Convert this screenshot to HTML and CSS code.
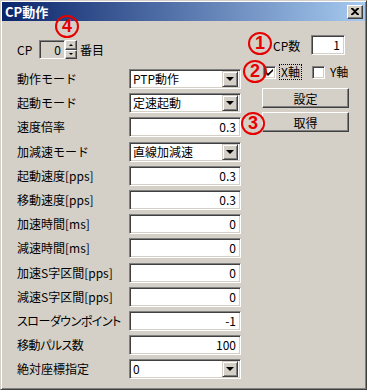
FILE: index.html
```html
<!DOCTYPE html>
<html lang="ja">
<head>
    <meta charset="UTF-8">
    <title>CP動作</title>
    <link rel="stylesheet" href="styles.css">
</head>
<body>

    <div class="window">
        <div class="titlebar">
            <span class="title">CP動作</span>
            <span class="close-btn">
                <svg width="8" height="7" viewBox="0 0 8 7"><path d="M0 0h2l2 2 2-2h2v1L5 3.5 8 6v1H6L4 5 2 7H0V6l3-2.5L0 1z" fill="#000"/></svg>
            </span>
        </div>

        <div class="client">
            <div class="left-col">
                <div class="cp-row">
                    <span class="cp-label">CP</span>
                    <span class="spin-box">0</span>
                    <span class="spin-btns">
                        <span class="spin-btn"><i class="tri-up"></i></span>
                        <span class="spin-btn"><i class="tri-down"></i></span>
                    </span>
                    <span class="cp-unit">番目</span>
                </div>

                <div class="form-grid">
                    <label>動作モード</label>
                    <div class="combo"><span class="combo-val">PTP動作</span><span class="combo-btn"><i class="tri-down big"></i></span></div>

                    <label>起動モード</label>
                    <div class="combo"><span class="combo-val">定速起動</span><span class="combo-btn"><i class="tri-down big"></i></span></div>

                    <label>速度倍率</label>
                    <div class="edit">0.3</div>

                    <label>加減速モード</label>
                    <div class="combo"><span class="combo-val">直線加減速</span><span class="combo-btn"><i class="tri-down big"></i></span></div>

                    <label>起動速度[pps]</label>
                    <div class="edit">0.3</div>

                    <label>移動速度[pps]</label>
                    <div class="edit">0.3</div>

                    <label>加速時間[ms]</label>
                    <div class="edit">0</div>

                    <label>減速時間[ms]</label>
                    <div class="edit">0</div>

                    <label>加速S字区間[pps]</label>
                    <div class="edit">0</div>

                    <label>減速S字区間[pps]</label>
                    <div class="edit">0</div>

                    <label class="narrow">スローダウンポイント</label>
                    <div class="edit">-1</div>

                    <label class="narrow">移動パルス数</label>
                    <div class="edit">100</div>

                    <label>絶対座標指定</label>
                    <div class="combo"><span class="combo-val">0</span><span class="combo-btn"><i class="tri-down big"></i></span></div>
                </div>
            </div>

            <div class="right-col">
                <div class="count-row">
                    <span>CP数</span>
                    <div class="edit count">1</div>
                </div>

                <div class="check-row">
                    <span class="checkbox">
                        <svg width="7" height="7" viewBox="0 0 7 7"><path d="M0 2v3l2 2 5-5V0L2 4.5z" fill="#000"/></svg>
                    </span>
                    <span class="check-label focused">X軸</span>
                    <span class="checkbox second"></span>
                    <span class="check-label">Y軸</span>
                </div>

                <button class="btn first">設定</button>
                <button class="btn">取得</button>
            </div>
        </div>

        <span class="mark mark-1">1</span>
        <span class="mark mark-2">2</span>
        <span class="mark mark-3">3</span>
        <span class="mark mark-4">4</span>
    </div>

</body>
</html>
```

FILE: styles.css
```css
* {
    margin: 0;
    padding: 0;
    box-sizing: border-box;
}

body {
    background-color: #d4d0c8;
    font-family: "Noto Sans CJK JP", sans-serif;
    font-size: 12px;
    color: #000;
}

.window {
    position: relative;
    width: 367px;
    height: 390px;
    padding: 1px;
    border: 1px solid;
    border-color: #d4d0c8 #404040 #404040 #d4d0c8;
    box-shadow: inset 1px 1px #fff, inset -1px -1px #808080;
    background: #d4d0c8;
}

.titlebar {
    height: 19px;
    display: flex;
    align-items: center;
    justify-content: space-between;
    padding: 0 2px 0 3px;
    background: linear-gradient(to right, #0a246a, #a6caf0);
}

.title {
    color: #fff;
    font-weight: bold;
    font-size: 13px;
    line-height: 19px;
}

.close-btn {
    width: 16px;
    height: 14px;
    display: flex;
    align-items: center;
    justify-content: center;
    background: #d4d0c8;
    border: 1px solid;
    border-color: #fff #404040 #404040 #fff;
    box-shadow: inset -1px -1px #808080;
}

.client {
    display: flex;
    padding-left: 15px;
}

/* left column */

.left-col {
    width: 224px;
    flex-shrink: 0;
    padding-top: 19px;
}

.cp-row {
    display: flex;
    align-items: center;
    height: 19px;
}

.cp-label {
    width: 22px;
}

.spin-box {
    width: 26px;
    height: 19px;
    padding-right: 3px;
    text-align: right;
    line-height: 17px;
    border: 1px solid;
    border-color: #808080 #fff #fff #808080;
    box-shadow: inset 1px 1px #404040;
    background: #d4d0c8;
}

.spin-btns {
    display: flex;
    flex-direction: column;
    width: 12px;
    height: 19px;
}

.spin-btn {
    flex: 1;
    display: flex;
    align-items: center;
    justify-content: center;
    border: 1px solid;
    border-color: #fff #404040 #404040 #fff;
    box-shadow: inset -1px -1px #808080;
}

.cp-unit {
    margin-left: 3px;
}

.tri-up, .tri-down {
    display: block;
    width: 0;
    height: 0;
    border-left: 2px solid transparent;
    border-right: 2px solid transparent;
}

.tri-up {
    border-bottom: 2px solid #000;
}

.tri-down {
    border-top: 2px solid #000;
}

.tri-down.big {
    border-left-width: 4px;
    border-right-width: 4px;
    border-top-width: 4px;
}

.form-grid {
    display: grid;
    grid-template-columns: 112px 112px;
    grid-auto-rows: 24.2px;
    margin-top: 10px;
}

.form-grid label {
    line-height: 20px;
    white-space: nowrap;
}

.form-grid .narrow {
    font-feature-settings: "palt";
    letter-spacing: -0.5px;
}

.edit, .combo {
    height: 20px;
    border: 1px solid;
    border-color: #808080 #fff #fff #808080;
    box-shadow: inset 1px 1px #404040, inset -1px -1px #d4d0c8;
    background: #fff;
}

.edit {
    text-align: right;
    padding-right: 4px;
    line-height: 18px;
}

.combo {
    display: flex;
    align-items: center;
    padding: 2px;
}

.combo-val {
    flex: 1;
    padding-left: 1px;
    line-height: 16px;
}

.combo-btn {
    width: 16px;
    height: 16px;
    display: flex;
    align-items: center;
    justify-content: center;
    background: #d4d0c8;
    border: 1px solid;
    border-color: #d4d0c8 #404040 #404040 #d4d0c8;
    box-shadow: inset 1px 1px #fff, inset -1px -1px #808080;
}

/* right column */

.right-col {
    width: 87px;
    flex-shrink: 0;
    margin-left: 21px;
    padding-top: 14px;
}

.count-row {
    display: flex;
    align-items: center;
    height: 20px;
    padding-left: 11px;
}

.edit.count {
    width: 34px;
    height: 20px;
    margin-left: auto;
    margin-right: 4px;
}

.check-row {
    display: flex;
    align-items: center;
    height: 16px;
    margin-top: 9px;
    padding-left: 1px;
    white-space: nowrap;
}

.checkbox {
    flex-shrink: 0;
    width: 13px;
    height: 13px;
    display: flex;
    align-items: center;
    justify-content: center;
    background: #fff;
    border: 1px solid;
    border-color: #808080 #fff #fff #808080;
    box-shadow: inset 1px 1px #404040, inset -1px -1px #d4d0c8;
}

.checkbox.second {
    margin-left: 10px;
}

.check-label {
    flex-shrink: 0;
    margin-left: 3px;
    padding: 0 1px;
    line-height: 14px;
    border: 1px solid transparent;
}

.check-label.focused {
    border: 1px dotted #000;
}

.btn {
    display: block;
    width: 87px;
    height: 20px;
    margin-top: 4px;
    font-family: inherit;
    font-size: 12px;
    color: #000;
    background: #d4d0c8;
    border: 1px solid;
    border-color: #fff #404040 #404040 #fff;
    box-shadow: inset -1px -1px #808080;
}

.btn.first {
    margin-top: 8px;
}

/* red annotation marks drawn over the dialog */

.mark {
    position: absolute;
    width: 24px;
    height: 23px;
    border: 2px solid #e60000;
    border-radius: 50%;
    color: #e60000;
    font-family: "Liberation Sans", sans-serif;
    font-weight: bold;
    font-size: 18px;
    line-height: 19px;
    text-align: center;
}

.mark-1 { left: 247px; top: 31px; }
.mark-2 { left: 242px; top: 59px; }
.mark-3 { left: 240px; top: 111px; }
.mark-4 { left: 54px; top: 14px; }
```
